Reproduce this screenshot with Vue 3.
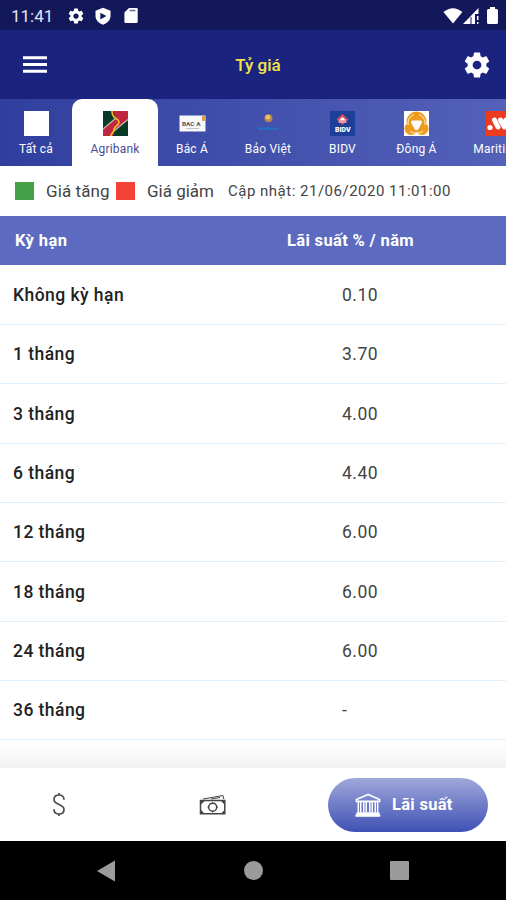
<template>
  <div class="screen">
    <div class="status">
      <span class="clock">11:41</span>
      <svg class="st-gear" width="18" height="18" viewBox="0 0 24 24"><path fill="#fff" fill-rule="evenodd" :d="gear"/></svg>
      <svg class="st-shield" width="18" height="18" viewBox="0 0 24 24">
        <path d="M12 1 2 5v7c0 5 4 9.500 10 11.500 6-2 10-6.500 10-11.500V5z" fill="#fff"/>
        <path d="M8.500 7.500v9L16.500 12z" fill="#13185b"/>
      </svg>
      <svg class="st-card" width="14" height="17" viewBox="0 0 14 17">
        <path d="M5 1h7.500q1.200 0 1.200 1.200v12.600q0 1.200-1.200 1.200h-11Q.4 16 .4 14.800V5.600z" fill="#fff"/>
        <path d="M5.500 3.500h6" stroke="#6f739f" stroke-width="1.600"/>
      </svg>
      <div class="status-right">
        <svg width="20" height="16" viewBox="0 0 20 16"><path d="M.4 4Q10-3.600 19.400 4L10 15.500z" fill="#fff"/></svg>
        <svg width="16" height="16" viewBox="0 0 16 16">
          <path d="M0 16 15.500 0v6H12v10z" fill="#fff"/>
          <path d="M8 9v7" stroke="#13185b" stroke-width="1"/>
          <path d="M14.700 8v4M14.700 14v2" stroke="#fff" stroke-width="1.500"/>
        </svg>
        <svg class="st-battery" width="11" height="17" viewBox="0 0 11 17"><path d="M3 0h5v2h1.500Q11 2 11 3.500v12q0 1.500-1.500 1.500h-8Q0 17 0 15.500v-12Q0 2 1.500 2H3z" fill="#fff"/></svg>
      </div>
    </div>

    <div class="header">
      <svg width="24" height="17" viewBox="0 0 24 17"><path d="M0 1.700h24M0 8.500h24M0 15.300h24" stroke="#fff" stroke-width="2.900"/></svg>
      <span class="title">Tỷ giá</span>
      <svg width="30" height="30" viewBox="0 0 24 24"><path fill="#fff" fill-rule="evenodd" :d="gear"/></svg>
    </div>

    <div class="tabs">
      <div class="tab w-all">
        <svg width="25" height="25"><rect width="25" height="25" fill="#fff"/></svg>
        <span>Tất cả</span>
      </div>
      <div class="tab w-agri active">
        <svg width="25" height="25" viewBox="0 0 25 25">
          <rect width="25" height="25" fill="#c0263f"/>
          <path d="M0 0h10l3 7L0 18z" fill="#073b27"/>
          <path d="M25 9v16H10l2-6z" fill="#073b27"/>
          <path d="M0 18 13 7M25 8.500 11 20" stroke="#c8b9a7" stroke-width="1.300"/>
          <path d="M9 0q0 5 4 7.500 4.500 2.500 2 6-4 3-4 6L7.500 25" fill="none" stroke="#f0b92b" stroke-width="1.700"/>
        </svg>
        <span>Agribank</span>
      </div>
      <div class="tab w-baca">
        <svg width="27" height="25" viewBox="0 0 27 25">
          <rect x=".5" y="4.500" width="26" height="16" fill="#f8f8fa"/>
          <path d="M23 5h3.500v5H23z" fill="#dfa34d"/>
          <text x="3" y="15" class="baca-logo" textLength="18.500" lengthAdjust="spacingAndGlyphs">BAC A</text>
          <path d="M7 17.500h13" stroke="#b4b4bd" stroke-width=".8"/>
        </svg>
        <span>Bắc Á</span>
      </div>
      <div class="tab w-viet">
        <svg width="25" height="25" viewBox="0 0 25 25">
          <circle cx="12.500" cy="7.300" r="4" fill="#b6894e"/>
          <circle cx="11.800" cy="6.200" r="2.400" fill="#f0bf62"/>
          <path d="M2 17.500h20" stroke="#1979cc" stroke-width="1.800" stroke-dasharray="2.500 .5"/>
        </svg>
        <span>Bảo Việt</span>
      </div>
      <div class="tab w-bidv">
        <svg width="25" height="25" viewBox="0 0 25 25">
          <rect width="25" height="25" fill="#1d3f99"/>
          <path d="m12.500 3 6 5.500-6 5.500-6-5.500z" fill="#d65264"/>
          <path d="m12.500 6 3.500 3.500h-7z" fill="#fff"/>
          <path d="M8.500 11h8" stroke="#e7aebf" stroke-width="1.500"/>
          <text x="5" y="21" class="bidv-logo" textLength="15.500" lengthAdjust="spacingAndGlyphs">BIDV</text>
        </svg>
        <span>BIDV</span>
      </div>
      <div class="tab w-donga">
        <svg width="25" height="25" viewBox="0 0 25 25">
          <rect width="25" height="25" fill="#fff"/>
          <circle cx="12.500" cy="10.500" r="10" fill="#ee9a1d"/>
          <circle cx="7" cy="17.500" r="6.500" fill="#ee9a1d"/>
          <circle cx="18" cy="17.500" r="6.500" fill="#ee9a1d"/>
          <path d="M4 14q-.5-8 6-10.500M21 14q.5-8-6-10.500M6 20.500q6.500 3 13 0" stroke="#fbdda6" stroke-width="1.200" fill="none"/>
          <path d="M8.500 10h8q1.500 0 1 1.500l-3.500 6.500q-1.500 1.500-3 0L7.500 11.500q-.5-1.500 1-1.500z" fill="#fff" stroke="#fff" stroke-width="1"/>
        </svg>
        <span>Đông Á</span>
      </div>
      <div class="tab w-mari">
        <svg width="25" height="25" viewBox="0 0 25 25">
          <rect width="25" height="25" fill="#ed3b22"/>
          <circle cx="4" cy="16.500" r="2.600" fill="#fff"/>
          <path d="M8.500 9l3.500 7M14.500 9l4 7M20 9l4 6" stroke="#fff" stroke-width="5" stroke-linecap="round"/>
        </svg>
        <span>Maritime</span>
      </div>
    </div>

    <div class="legend">
      <i class="box up"></i>
      <span class="txt-up">Giá tăng</span>
      <i class="box down"></i>
      <span class="txt-down">Giá giảm</span>
      <span class="updated">Cập nhật: 21/06/2020 11:01:00</span>
    </div>

    <div class="table-head">
      <span class="col-term">Kỳ hạn</span>
      <span class="col-rate">Lãi suất % / năm</span>
    </div>
    <div class="rows">
      <div class="row" v-for="item in rates" :key="item.term">
        <span class="term">{{ item.term }}</span>
        <span class="rate">{{ item.rate }}</span>
      </div>
      <div class="fade"></div>
    </div>

    <div class="bottom">
      <svg class="ic-dollar" width="14" height="25" viewBox="0 0 14 25">
        <path d="M7 1v2.200M7 21.800V24M12 7.800C12 4.800 10 3 7 3S2 4.800 2 7.500c0 6 10 4 10 10 0 2.700-2 4.500-5 4.500s-5-1.700-5-4.800" fill="none" stroke="#4c4c4c" stroke-width="1.700"/>
      </svg>
      <svg class="ic-cash" width="28" height="22" viewBox="0 0 28 22">
        <g fill="none" stroke="#444" stroke-width="1.500">
          <path d="M1.500 6.500h24.300v13.300H1.500z"/>
          <circle cx="13.700" cy="13.200" r="4"/>
          <path d="M4 5 24 1.500 24.800 5M12 5l9-1.500" stroke-width="1"/>
          <path d="M13.700 8v1.500M13.700 17v1.500M8.500 13.200H10M17.500 13.200H19" stroke-width="1"/>
        </g>
        <path d="M2 7h3.500L2 10.500zM25.500 7H22l3.500 3.500zM2 19.500h3.500L2 16zM25.500 19.500H22l3.500-3.500z" fill="#444"/>
      </svg>
      <div class="pill">
        <svg width="26" height="24" viewBox="0 0 26 24">
          <path d="M13 1.500 1.500 6.500v1.800h23V6.500z" fill="none" stroke="#fff" stroke-width="1.700"/>
          <path d="M3.300 9v10M5.700 9v10M8.800 9v10M11.200 9v10M14.800 9v10M17.200 9v10M20.300 9v10M22.700 9v10" stroke="#fff" stroke-width="1.500"/>
          <path d="M1.800 19.500h22.400v2H25V23.500H.8v-2h1z" fill="#fff" stroke="#fff" stroke-width=".6"/>
        </svg>
        <span>Lãi suất</span>
      </div>
    </div>

    <div class="navbar">
      <svg class="nav-back" width="18" height="22" viewBox="0 0 18 22"><path d="M0 11 18 .5v21z" fill="#9b9b9b"/></svg>
      <i class="nav-home"></i>
      <i class="nav-recent"></i>
    </div>
  </div>
</template>

<script setup>
const gear = 'M19.430 12.980c.04-.32.07-.64.07-.98s-.03-.66-.07-.98l2.110-1.650c.19-.15.24-.42.12-.64l-2-3.460c-.12-.22-.39-.3-.61-.22l-2.490 1c-.52-.4-1.080-.73-1.690-.98l-.38-2.650C14.460 2.180 14.250 2 14 2h-4c-.25 0-.46.18-.49.42l-.38 2.650c-.61.25-1.170.59-1.690.98l-2.490-1c-.23-.09-.49 0-.61.22l-2 3.460c-.13.22-.07.49.12.64l2.110 1.650c-.04.32-.07.65-.07.98s.03.66.07.98l-2.110 1.650c-.19.15-.24.42-.12.64l2 3.460c.12.22.39.3.61.22l2.490-1c.52.4 1.080.73 1.690.98l.38 2.650c.03.24.24.42.49.42h4c.25 0 .46-.18.49-.42l.38-2.650c.61-.25 1.170-.59 1.690-.98l2.490 1c.23.09.49 0 .61-.22l2-3.460c.12-.22.07-.49-.12-.64zM12 15.500a3.500 3.500 0 1 1 0-7 3.500 3.500 0 0 1 0 7z'

const rates = [
  { term: 'Không kỳ hạn', rate: '0.10' },
  { term: '1 tháng', rate: '3.70' },
  { term: '3 tháng', rate: '4.00' },
  { term: '6 tháng', rate: '4.40' },
  { term: '12 tháng', rate: '6.00' },
  { term: '18 tháng', rate: '6.00' },
  { term: '24 tháng', rate: '6.00' },
  { term: '36 tháng', rate: '-' },
]
</script>

<style>
body {
  margin: 0;
  overflow: hidden;
}
</style>

<style scoped>
.screen {
  width: 506px;
  height: 900px;
  display: flex;
  flex-direction: column;
  overflow: hidden;
  background: #fff;
  font-family: Roboto, "Noto Sans", sans-serif;
  white-space: nowrap;
}
svg {
  display: block;
  flex: none;
}
.status {
  height: 30px;
  flex: none;
  display: flex;
  align-items: center;
  padding: 1px 8px 0 11px;
  box-sizing: border-box;
  background: #13185b;
}
.clock {
  width: 56px;
  font-size: 17px;
  color: #e4e5f2;
}
.st-shield {
  margin-left: 9px;
}
.st-card {
  margin-left: 12px;
}
.status-right {
  display: flex;
  align-items: center;
  margin-left: auto;
}
.st-battery {
  margin-left: 8px;
}
.header {
  height: 69px;
  flex: none;
  display: flex;
  align-items: center;
  justify-content: space-between;
  padding: 0 14px 0 23px;
  box-sizing: border-box;
  background: #1a237e;
}
.title {
  padding-left: 7px;
  font-size: 17px;
  font-weight: 500;
  color: #f6e34b;
}
.tabs {
  height: 67px;
  flex: none;
  display: flex;
  overflow: hidden;
  background: linear-gradient(90deg, #303f9f, #5361b9);
}
.tab {
  flex: none;
  display: flex;
  flex-direction: column;
  align-items: center;
  padding-top: 12px;
  box-sizing: border-box;
  color: #fff;
  font-size: 12px;
  letter-spacing: 0.2px;
}
.tab span {
  margin-top: 6px;
  line-height: 14px;
}
.active {
  background: #fff;
  color: #4a4a96;
  border-radius: 10px 10px 0 0;
}
.w-all { width: 72px; }
.w-agri { width: 86px; }
.w-baca { width: 68px; }
.w-viet { width: 84px; }
.w-bidv { width: 65px; }
.w-donga { width: 83px; }
.w-mari { width: 80px; }
.baca-logo {
  font-size: 6px;
  font-weight: 700;
  letter-spacing: 0;
  fill: #555;
}
.bidv-logo {
  font-size: 6.5px;
  font-weight: 900;
  letter-spacing: 0;
  fill: #fff;
}
.legend {
  height: 50px;
  flex: none;
  display: flex;
  align-items: center;
  padding-left: 15px;
  color: #444;
  font-size: 17px;
}
.box {
  width: 19px;
  height: 18px;
}
.up {
  background: #43a047;
}
.down {
  background: #f44336;
}
.txt-up {
  width: 70px;
  margin-left: 12px;
  letter-spacing: 0.1px;
}
.txt-down {
  width: 68px;
  margin-left: 12px;
}
.updated {
  margin-left: 13px;
  font-size: 15px;
  letter-spacing: 0.5px;
}
.table-head {
  height: 49px;
  flex: none;
  display: flex;
  align-items: center;
  padding-left: 15px;
  background: #5c6bc0;
  color: #fff;
  font-size: 16.5px;
  font-weight: 700;
}
.col-term {
  width: 272px;
  letter-spacing: 0.4px;
}
.col-rate {
  letter-spacing: 0.35px;
}
.rows {
  height: 503px;
  flex: none;
}
.row {
  height: 59.35px;
  display: flex;
  align-items: center;
  padding-left: 13px;
  box-sizing: border-box;
  border-bottom: 1px solid #e1f0fb;
  font-size: 17px;
}
.row:first-child {
  height: 60px;
}
.term {
  width: 329px;
  color: #222;
  font-size: 17.5px;
  font-weight: 500;
  letter-spacing: 0.45px;
}
.rate {
  color: #444;
  font-size: 17.5px;
  letter-spacing: 0.5px;
}
.fade {
  height: 28px;
  background: linear-gradient(#fff, #fbfbfb 45%, #f0f1f1);
}
.bottom {
  height: 73px;
  flex: none;
  display: flex;
  align-items: center;
  padding-right: 18px;
  background: #fff;
}
.ic-dollar {
  margin-left: 52px;
}
.ic-cash {
  margin-left: 133px;
}
.pill {
  width: 160px;
  height: 54px;
  margin-left: auto;
  display: flex;
  align-items: center;
  gap: 11px;
  padding-left: 27px;
  box-sizing: border-box;
  border-radius: 27px;
  background: linear-gradient(#9fa8da, #3f51b5);
  color: #fff;
  font-size: 16.5px;
  font-weight: 700;
  letter-spacing: 0.3px;
}
.navbar {
  height: 59px;
  flex: none;
  display: flex;
  align-items: center;
  background: #000;
}
.nav-back {
  margin-left: 97px;
}
.nav-home {
  width: 19px;
  height: 19px;
  margin-left: 129px;
  border-radius: 50%;
  background: #9b9b9b;
}
.nav-recent {
  width: 19px;
  height: 19px;
  margin-left: 127px;
  border-radius: 1px;
  background: #9b9b9b;
}
</style>
